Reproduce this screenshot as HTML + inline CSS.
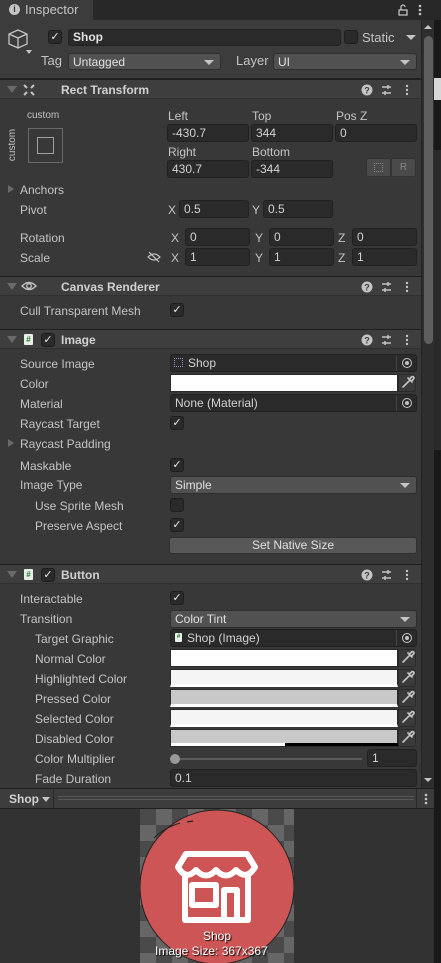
<!DOCTYPE html>
<html><head><meta charset="utf-8"><style>
*{box-sizing:border-box;margin:0;padding:0}
body{width:441px;height:963px;background:#383838;font-family:"Liberation Sans",sans-serif;font-size:12px;color:#c4c4c4;position:relative;overflow:hidden}
.a{position:absolute}
.l{position:absolute;line-height:14px;white-space:nowrap}
.f{position:absolute;background:#2a2a2a;border:1px solid #212121;border-radius:3px;height:18px;line-height:16px;padding-left:4px;color:#d2d2d2;white-space:nowrap}
.d{position:absolute;background:#515151;border:1px solid #2e2e2e;border-radius:3px;height:18px;line-height:16px;padding-left:4px;color:#e0e0e0}
.d:after{content:"";position:absolute;right:6px;top:6px;border-left:5px solid transparent;border-right:5px solid transparent;border-top:5px solid #c4c4c4}
.cb{position:absolute;width:14px;height:14px;background:#2a2a2a;border:1px solid #1e1e1e;border-radius:3px;color:#e8e8e8;font-size:11px;line-height:12px;text-align:center}
.h{position:absolute;left:0;width:421px;height:20px;background:#3e3e3e;border-top:1px solid #1f1f1f;border-bottom:1px solid #303030}
.h b{position:absolute;left:61px;top:3px;font-size:12px;color:#d0d0d0}
.tri{position:absolute;left:7px;top:6px;border-left:5px solid transparent;border-right:5px solid transparent;border-top:7px solid #6a6a6a}
.hi{position:absolute;left:360px;top:3px}
.col{position:absolute;left:170px;width:228px;height:18px;border:1px solid #2a2a2a}
.pk{position:absolute;left:398px;width:18px;height:18px;background:#3a3a3a;border:1px solid #2a2a2a;border-radius:0 3px 3px 0}
.tg{position:absolute;right:0;top:0;width:20px;height:16px;border-left:1px solid #444}
.tg:after{content:"";position:absolute;left:5px;top:3px;width:8px;height:8px;border:1.3px solid #c4c4c4;border-radius:50%;box-shadow:inset 0 0 0 2px #2a2a2a,inset 0 0 0 4px #c4c4c4}
.sh{position:absolute;width:9px;height:11px;background:#e6f0e6;border-radius:1px;font-size:8px;color:#2a7a2a;line-height:11px;text-align:center;font-weight:bold}
</style></head><body>
<svg width="0" height="0" style="position:absolute"><defs>
<g id="hd"><circle cx="7" cy="7" r="5.5" fill="#c4c4c4"/><text x="7" y="10.5" font-size="9" font-weight="bold" text-anchor="middle" fill="#3e3e3e" font-family="Liberation Sans">?</text>
<path d="M22 4h9M22 10h9" stroke="#c4c4c4" stroke-width="1.5"/><path d="M28 2v4M25 8v4" stroke="#c4c4c4" stroke-width="1.5"/>
<circle cx="47" cy="3" r="1.2" fill="#c4c4c4"/><circle cx="47" cy="7" r="1.2" fill="#c4c4c4"/><circle cx="47" cy="11" r="1.2" fill="#c4c4c4"/></g>
<g id="pkr"><path d="M4 12 L10 6 M9 3 L13 7 M11 3.5 L12.5 2 Q13.5 1 14.5 2 Q15.5 3 14.5 4 L13 5.5" stroke="#c4c4c4" stroke-width="1.6" fill="none" stroke-linecap="round"/></g>
</defs></svg>
<!-- tab bar -->
<div class="a" style="left:0;top:0;width:441px;height:20px;background:#282828"></div>
<div class="a" style="left:0;top:0;width:93px;height:20px;background:#3c3c3c"></div>
<div class="a" style="left:9px;top:4px;width:11px;height:11px;border-radius:50%;background:#c4c4c4;color:#3c3c3c;font-size:9px;font-weight:bold;text-align:center;line-height:11px">i</div>
<div class="l" style="left:25px;top:3px;font-size:13px">Inspector</div>
<svg class="a" style="left:397px;top:3px" width="12" height="13"><path d="M2 7h8v5H2z M4 7V4a2 2 0 0 1 4 0" fill="none" stroke="#c4c4c4" stroke-width="1.3"/></svg>
<svg class="a" style="left:417px;top:3px" width="6" height="14"><circle cx="3" cy="3" r="1.3" fill="#c4c4c4"/><circle cx="3" cy="7" r="1.3" fill="#c4c4c4"/><circle cx="3" cy="11" r="1.3" fill="#c4c4c4"/></svg>
<!-- header -->
<div class="a" style="left:0;top:20px;width:422px;height:59px;background:#3c3c3c;border-bottom:1px solid #1f1f1f"></div>
<svg class="a" style="left:7px;top:28px" width="26" height="28" viewBox="0 0 26 28"><path d="M11 2 L20 6 L20 16 L11 20 L2 16 L2 6 Z M2 6 L11 10 L20 6 M11 10 L11 20" fill="none" stroke="#c4c4c4" stroke-width="1.3"/><path d="M25 22 L19 22 L22 26Z" fill="#c4c4c4"/></svg>
<div class="cb" style="left:48px;top:30px">✓</div>
<div class="f" style="left:68px;top:29px;width:273px;height:17px;line-height:15px;font-weight:bold;color:#e0e0e0">Shop</div>
<div class="cb" style="left:344px;top:30px"></div>
<div class="l" style="left:362px;top:31px;font-size:13px">Static</div>
<div class="a" style="left:406px;top:35px;border-left:5px solid transparent;border-right:5px solid transparent;border-top:5px solid #c4c4c4"></div>
<div class="l" style="left:41px;top:54px;font-size:13px">Tag</div>
<div class="d" style="left:68px;top:53px;width:153px;height:17px">Untagged</div>
<div class="l" style="left:236px;top:54px;font-size:13px">Layer</div>
<div class="d" style="left:273px;top:53px;width:144px;height:17px">UI</div>
<!-- Rect Transform -->
<div class="h" style="top:79px"><div class="tri"></div>
<svg class="a" style="left:22px;top:3px" width="14" height="14"><path d="M2 2l3 3M12 2l-3 3M2 12l3-3M12 12l-3-3" stroke="#c4c4c4" stroke-width="2"/></svg>
<b>Rect Transform</b><svg class="hi" width="52" height="14"><use href="#hd"/></svg></div>
<div class="l" style="left:27px;top:109px;font-size:10px">custom</div>
<div class="l" style="left:-3px;top:138px;font-size:10px;transform:rotate(-90deg)">custom</div>
<div class="a" style="left:28px;top:128px;width:35px;height:35px;border:1px solid #6a6a6a"></div>
<div class="a" style="left:37px;top:137px;width:17px;height:17px;border:1px solid #a0a0a0"></div>
<div class="l" style="left:168px;top:109px">Left</div>
<div class="l" style="left:252px;top:109px">Top</div>
<div class="l" style="left:336px;top:109px">Pos Z</div>
<div class="f" style="left:167px;top:124px;width:82px">-430.7</div>
<div class="f" style="left:251px;top:124px;width:82px">344</div>
<div class="f" style="left:335px;top:124px;width:82px">0</div>
<div class="l" style="left:168px;top:145px">Right</div>
<div class="l" style="left:252px;top:145px">Bottom</div>
<div class="f" style="left:167px;top:160px;width:82px">430.7</div>
<div class="f" style="left:251px;top:160px;width:82px">-344</div>
<div class="a" style="left:366px;top:158px;width:25px;height:19px;background:#4a4a4a;border:1px solid #333;border-radius:3px 0 0 3px"><div class="a" style="left:7px;top:4px;width:9px;height:9px;border:1px dotted #888"></div></div>
<div class="a" style="left:391px;top:158px;width:25px;height:19px;background:#4a4a4a;border:1px solid #333;border-radius:0 3px 3px 0;color:#888;text-align:center;line-height:17px;font-size:10px">R</div>
<div class="a" style="left:8px;top:185px;border-top:4px solid transparent;border-bottom:4px solid transparent;border-left:6px solid #6a6a6a"></div>
<div class="l" style="left:20px;top:183px">Anchors</div>
<div class="l" style="left:20px;top:203px">Pivot</div>
<div class="l" style="left:168px;top:203px">X</div><div class="f" style="left:179px;top:200px;width:70px">0.5</div>
<div class="l" style="left:252px;top:203px">Y</div><div class="f" style="left:263px;top:200px;width:70px">0.5</div>
<div class="l" style="left:20px;top:231px">Rotation</div>
<div class="l" style="left:20px;top:251px">Scale</div>
<svg class="a" style="left:147px;top:251px" width="14" height="12"><path d="M1 6 Q7 0 13 6 Q7 12 1 6Z M2 1 L12 11" fill="none" stroke="#c4c4c4" stroke-width="1.2"/></svg>
<div class="l" style="left:171px;top:231px">X</div><div class="f" style="left:185px;top:228px;width:65px">0</div>
<div class="l" style="left:255px;top:231px">Y</div><div class="f" style="left:269px;top:228px;width:65px">0</div>
<div class="l" style="left:338px;top:231px">Z</div><div class="f" style="left:352px;top:228px;width:65px">0</div>
<div class="l" style="left:171px;top:251px">X</div><div class="f" style="left:185px;top:248px;width:65px">1</div>
<div class="l" style="left:255px;top:251px">Y</div><div class="f" style="left:269px;top:248px;width:65px">1</div>
<div class="l" style="left:338px;top:251px">Z</div><div class="f" style="left:352px;top:248px;width:65px">1</div>
<!-- Canvas Renderer -->
<div class="h" style="top:276px"><div class="tri"></div>
<svg class="a" style="left:21px;top:3px" width="16" height="12"><path d="M1 6 Q8 -1 15 6 Q8 13 1 6Z" fill="none" stroke="#c4c4c4" stroke-width="1.3"/><circle cx="8" cy="6" r="2.3" fill="none" stroke="#c4c4c4" stroke-width="1.3"/></svg>
<b>Canvas Renderer</b><svg class="hi" width="52" height="14"><use href="#hd"/></svg></div>
<div class="l" style="left:20px;top:304px">Cull Transparent Mesh</div>
<div class="cb" style="left:170px;top:303px">✓</div>
<!-- Image -->
<div class="h" style="top:329px"><div class="tri"></div><div class="sh" style="left:24px;top:4px">#</div><div class="cb" style="left:41px;top:3px">✓</div><b>Image</b>
<svg class="hi" width="52" height="14"><use href="#hd"/></svg></div>
<div class="l" style="left:20px;top:357px">Source Image</div>
<div class="f" style="left:170px;top:354px;width:247px;padding-left:17px">Shop<div class="a" style="left:3px;top:3px;width:9px;height:9px;border:1px dotted #a08ad0"></div><div class="tg"></div></div>
<div class="l" style="left:20px;top:377px">Color</div>
<div class="col" style="top:374px;background:#fff"></div><svg class="pk" style="top:374px" width="18" height="18"><use href="#pkr"/></svg>
<div class="l" style="left:20px;top:397px">Material</div>
<div class="f" style="left:170px;top:394px;width:247px">None (Material)<div class="tg"></div></div>
<div class="l" style="left:20px;top:417px">Raycast Target</div>
<div class="cb" style="left:170px;top:416px">✓</div>
<div class="a" style="left:8px;top:439px;border-top:4px solid transparent;border-bottom:4px solid transparent;border-left:6px solid #6a6a6a"></div>
<div class="l" style="left:20px;top:437px">Raycast Padding</div>
<div class="l" style="left:20px;top:459px">Maskable</div>
<div class="cb" style="left:170px;top:458px">✓</div>
<div class="l" style="left:20px;top:478px">Image Type</div>
<div class="d" style="left:170px;top:476px;width:247px">Simple</div>
<div class="l" style="left:35px;top:499px">Use Sprite Mesh</div>
<div class="cb" style="left:170px;top:498px"></div>
<div class="l" style="left:35px;top:519px">Preserve Aspect</div>
<div class="cb" style="left:170px;top:518px">✓</div>
<div class="a" style="left:169px;top:537px;width:248px;height:17px;background:#585858;border:1px solid #303030;border-radius:3px;text-align:center;line-height:15px;color:#e0e0e0">Set Native Size</div>
<!-- Button -->
<div class="h" style="top:564px"><div class="tri"></div><div class="sh" style="left:24px;top:4px">#</div><div class="cb" style="left:41px;top:3px">✓</div><b>Button</b>
<svg class="hi" width="52" height="14"><use href="#hd"/></svg></div>
<div class="l" style="left:20px;top:592px">Interactable</div>
<div class="cb" style="left:170px;top:591px">✓</div>
<div class="l" style="left:20px;top:612px">Transition</div>
<div class="d" style="left:170px;top:610px;width:247px">Color Tint</div>
<div class="l" style="left:35px;top:632px">Target Graphic</div>
<div class="f" style="left:170px;top:629px;width:247px;padding-left:16px">Shop (Image)<div class="sh" style="left:4px;top:3px;width:7px;height:9px;font-size:6px;line-height:9px">#</div><div class="tg"></div></div>
<div class="l" style="left:35px;top:652px">Normal Color</div>
<div class="col" style="top:649px;background:#fff"></div><svg class="pk" style="top:649px" width="18" height="18"><use href="#pkr"/></svg>
<div class="l" style="left:35px;top:672px">Highlighted Color</div>
<div class="col" style="top:669px;background:#f5f5f5;border-bottom:3px solid #fff"></div><svg class="pk" style="top:669px" width="18" height="18"><use href="#pkr"/></svg>
<div class="l" style="left:35px;top:692px">Pressed Color</div>
<div class="col" style="top:689px;background:#c8c8c8;border-bottom:3px solid #fff"></div><svg class="pk" style="top:689px" width="18" height="18"><use href="#pkr"/></svg>
<div class="l" style="left:35px;top:712px">Selected Color</div>
<div class="col" style="top:709px;background:#f5f5f5;border-bottom:3px solid #fff"></div><svg class="pk" style="top:709px" width="18" height="18"><use href="#pkr"/></svg>
<div class="l" style="left:35px;top:732px">Disabled Color</div>
<div class="col" style="top:729px;background:#c8c8c8"><div class="a" style="left:0;bottom:0;width:114px;height:3px;background:#fff"></div><div class="a" style="left:114px;bottom:0;width:113px;height:3px;background:#000"></div></div><svg class="pk" style="top:729px" width="18" height="18"><use href="#pkr"/></svg>
<div class="l" style="left:35px;top:752px">Color Multiplier</div>
<div class="a" style="left:175px;top:758px;width:187px;height:2px;background:#5a5a5a"></div>
<div class="a" style="left:170px;top:754px;width:10px;height:10px;border-radius:50%;background:#999"></div>
<div class="f" style="left:367px;top:749px;width:50px">1</div>
<div class="l" style="left:35px;top:772px">Fade Duration</div>
<div class="f" style="left:170px;top:769px;width:247px">0.1</div>
<!-- scrollbar -->
<div class="a" style="left:421px;top:20px;width:1px;height:768px;background:#232323"></div>
<div class="a" style="left:422px;top:20px;width:12px;height:768px;background:#2e2e2e"></div>
<div class="a" style="left:424px;top:25px;border-left:4px solid transparent;border-right:4px solid transparent;border-bottom:4px solid #c4c4c4"></div>
<div class="a" style="left:424px;top:36px;width:9px;height:308px;border-radius:5px;background:#5e5e5e"></div>
<div class="a" style="left:424px;top:778px;border-left:4px solid transparent;border-right:4px solid transparent;border-top:4px solid #c4c4c4"></div>
<div class="a" style="left:434px;top:20px;width:7px;height:943px;background:#191919"></div>
<div class="a" style="left:434px;top:78px;width:7px;height:22px;background:#d8d8d8"></div>
<div class="a" style="left:434px;top:150px;width:7px;height:300px;background:#2a2a2a"></div>
<!-- preview bar -->
<div class="a" style="left:0;top:788px;width:434px;height:21px;background:#3c3c3c;border-top:1px solid #1f1f1f;border-bottom:1px solid #1f1f1f"></div>
<div class="l" style="left:9px;top:792px;font-weight:bold;color:#d0d0d0">Shop</div>
<div class="a" style="left:42px;top:797px;border-left:4px solid transparent;border-right:4px solid transparent;border-top:5px solid #c4c4c4"></div>
<div class="a" style="left:53px;top:789px;width:1px;height:19px;background:#2a2a2a"></div>
<div class="a" style="left:58px;top:796px;width:356px;height:4px;border-top:1px solid #5a5a5a;border-bottom:1px solid #5a5a5a"></div>
<div class="a" style="left:416px;top:789px;width:1px;height:19px;background:#2a2a2a"></div>
<svg class="a" style="left:423px;top:792px" width="6" height="14"><circle cx="3" cy="3" r="1.3" fill="#c4c4c4"/><circle cx="3" cy="7" r="1.3" fill="#c4c4c4"/><circle cx="3" cy="11" r="1.3" fill="#c4c4c4"/></svg>
<!-- preview -->
<div class="a" style="left:0;top:809px;width:434px;height:154px;background:#323232"></div>
<div class="a" style="left:140px;top:809px;width:154px;height:154px;background-color:#4a4a4a;background-image:linear-gradient(45deg,#666 25%,transparent 25%,transparent 75%,#666 75%),linear-gradient(45deg,#666 25%,transparent 25%,transparent 75%,#666 75%);background-size:32px 32px;background-position:0 0,16px 16px"></div>
<svg class="a" style="left:140px;top:809px" width="154" height="154" viewBox="0 0 154 154">
<circle cx="77" cy="78" r="77" fill="#cd5555" stroke="#222" stroke-width="1"/>
<path d="M14 29 Q24 19 40 14" fill="none" stroke="#222" stroke-width="1"/>
<path d="M47 13 L53 12" fill="none" stroke="#222" stroke-width="1.2"/>
<g fill="none" stroke="#fff" stroke-width="6" stroke-linejoin="round" stroke-linecap="round">
<path d="M38 58 L46 45 L107 45 L115 58 Q107 72 96 61 Q86 72 76 61 Q66 72 56 61 Q46 72 38 58 Z"/>
<path d="M45 66 L45 111 L108 111 L108 66"/>
<rect x="52" y="76" width="24" height="20"/>
<path d="M84 111 L84 81 L97 81 L97 111"/>
</g></svg>
<div class="l" style="left:203px;top:929px;color:#fff;text-shadow:1px 1px 1px #000">Shop</div>
<div class="l" style="left:155px;top:944px;color:#fff;text-shadow:1px 1px 1px #000">Image Size: 367x367</div>
</body></html>
